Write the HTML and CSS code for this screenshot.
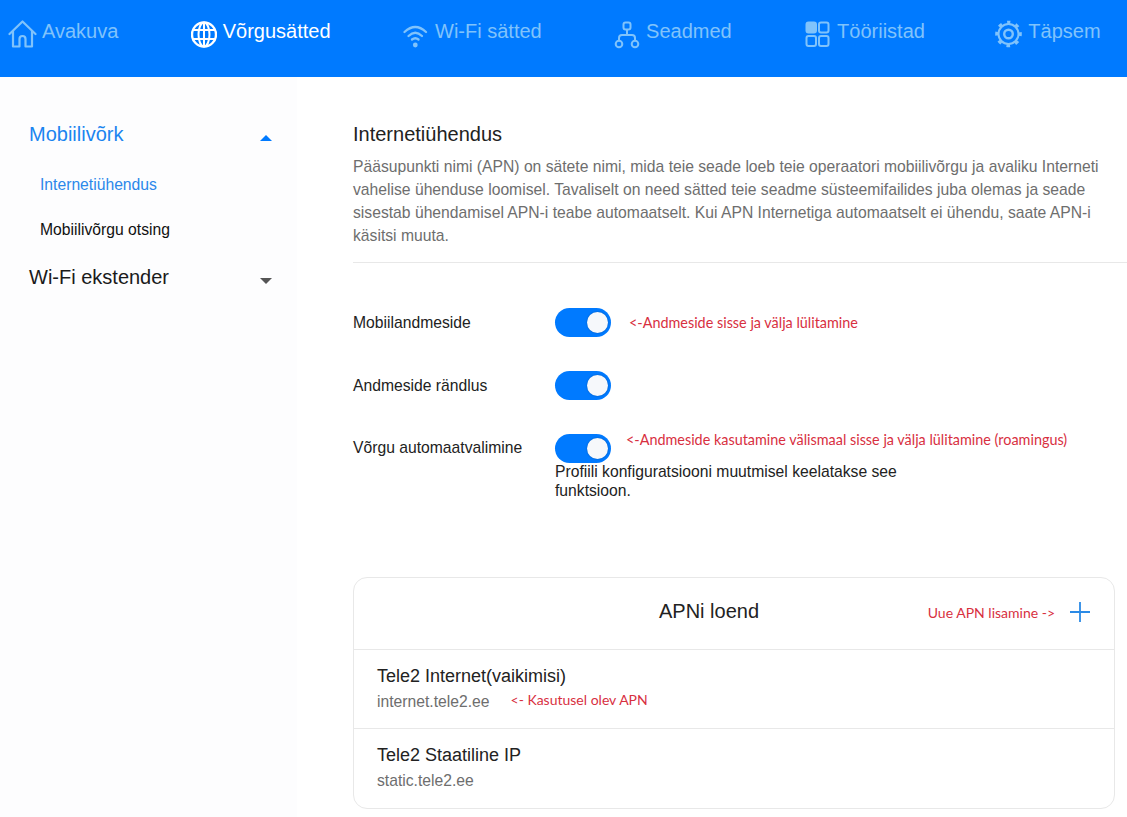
FILE: index.html
```html
<!DOCTYPE html>
<html lang="et">
<head>
<meta charset="utf-8">
<title>Internetiühendus</title>
<link rel="stylesheet" href="styles.css">
</head>
<body>
<header class="topbar">
  <nav class="nav">
    <a class="nav-item">
      <svg class="nav-icon w29" viewBox="0 0 29 30" fill="none" stroke="currentColor" stroke-width="2.200" stroke-linejoin="round" stroke-linecap="round"><path d="M1.500 15 14.500 2.500 27.500 15"/><path d="M5 12v15.500h6.500V20a3 3 0 0 1 6 0v7.500H24V12"/></svg>
      <span>Avakuva</span>
    </a>
    <a class="nav-item active">
      <svg class="nav-icon" viewBox="0 0 26 30" fill="none" stroke="currentColor" stroke-width="2"><circle cx="13" cy="15.500" r="12" stroke-width="2.400"/><ellipse cx="13" cy="15.500" rx="5.500" ry="12"/><path d="M2 11h22M2 20h22M13 3.500v24"/></svg>
      <span>Võrgusätted</span>
    </a>
    <a class="nav-item">
      <svg class="nav-icon" viewBox="0 0 26 30" fill="none" stroke="currentColor" stroke-width="2.300" stroke-linecap="round"><path d="M1.500 13Q12.300 3 23 13"/><path d="M5.500 17Q12.300 10.500 19 17"/><path d="M9 20.500Q12.300 18 15.500 20.500"/><circle cx="12.300" cy="26" r="2.400" fill="currentColor" stroke="none"/></svg>
      <span>Wi-Fi sätted</span>
    </a>
    <a class="nav-item">
      <svg class="nav-icon" viewBox="0 0 26 30" fill="none" stroke="currentColor" stroke-width="2"><rect x="9.500" y="3.500" width="7" height="7" rx="2"/><circle cx="5" cy="25" r="3.300"/><circle cx="21" cy="25" r="3.300"/><path d="M13 10.500V16M5 21.500V19a3 3 0 0 1 3-3h10a3 3 0 0 1 3 3v2.500"/></svg>
      <span>Seadmed</span>
    </a>
    <a class="nav-item">
      <svg class="nav-icon w27" viewBox="0 0 27 30" fill="none" stroke="currentColor" stroke-width="2"><rect x="2.500" y="3.500" width="9.500" height="10" rx="2" fill="currentColor"/><rect x="15" y="3.500" width="9.500" height="10" rx="2"/><rect x="2.500" y="17" width="9.500" height="10" rx="2"/><rect x="15" y="17" width="9.500" height="10" rx="2"/></svg>
      <span>Tööriistad</span>
    </a>
    <a class="nav-item nav-last">
      <svg class="nav-icon w27" viewBox="0 0 27 30" fill="none" stroke="currentColor" stroke-width="2"><circle cx="13.500" cy="15" r="10"/><circle cx="13.500" cy="15" r="4.300" stroke-width="2.400"/><circle class="teeth" cx="13.500" cy="15" r="11.800"/></svg>
      <span>Täpsem</span>
    </a>
  </nav>
</header>

<div class="page">
  <aside class="sidebar">
    <div class="menu-head current">
      <span>Mobiilivõrk</span>
      <i class="caret up"></i>
    </div>
    <a class="sub-item current">Internetiühendus</a>
    <a class="sub-item">Mobiilivõrgu otsing</a>
    <div class="menu-head second">
      <span>Wi-Fi ekstender</span>
      <i class="caret down"></i>
    </div>
  </aside>

  <main class="content">
    <section class="intro">
      <h1 class="title">Internetiühendus</h1>
      <p class="desc">Pääsupunkti nimi (APN) on sätete nimi, mida teie seade loeb teie operaatori mobiilivõrgu ja avaliku Interneti vahelise ühenduse loomisel. Tavaliselt on need sätted teie seadme süsteemifailides juba olemas ja seade sisestab ühendamisel APN-i teabe automaatselt. Kui APN Internetiga automaatselt ei ühendu, saate APN-i käsitsi muuta.</p>
    </section>

    <section class="settings">
      <div class="row">
        <div class="row-label">Mobiilandmeside</div>
        <div class="row-value"><span class="switch"></span><span class="note note-a">&lt;-Andmeside sisse ja välja lülitamine</span></div>
      </div>
      <div class="row">
        <div class="row-label">Andmeside rändlus</div>
        <div class="row-value"><span class="switch"></span></div>
      </div>
      <div class="row last">
        <div class="row-label tight">Võrgu automaatvalimine</div>
        <div class="row-stack">
          <div class="row-value"><span class="switch"></span><span class="note note-b">&lt;-Andmeside kasutamine välismaal sisse ja välja lülitamine (roamingus)</span></div>
          <p class="hint">Profiili konfiguratsiooni muutmisel keelatakse see funktsioon.</p>
        </div>
      </div>
    </section>

    <section class="card">
      <div class="card-head">
        <span class="card-title">APNi loend</span>
        <div class="card-action">
          <span class="note">Uue APN lisamine -&gt;</span>
          <svg class="plus" viewBox="0 0 20 20" stroke="#2b8ae6" stroke-width="1.800" fill="none"><path d="M10 0v20M0 10h20"/></svg>
        </div>
      </div>
      <div class="apn">
        <div class="apn-name">Tele2 Internet(vaikimisi)</div>
        <div class="apn-line"><span class="apn-host">internet.tele2.ee</span><span class="note note-c">&lt;- Kasutusel olev APN</span></div>
      </div>
      <div class="apn">
        <div class="apn-name">Tele2 Staatiline IP</div>
        <div class="apn-line"><span class="apn-host">static.tele2.ee</span></div>
      </div>
    </section>
  </main>
</div>
</body>
</html>
```

FILE: styles.css
```css
* { box-sizing: border-box; }

html, body {
  margin: 0;
  height: 817px;
  overflow: hidden;
  background: #fff;
  font-family: "Liberation Sans", Arial, sans-serif;
  color: #111;
}

.topbar {
  height: 77px;
  background: #007aff;
  padding: 17px 0 0 8px;
}

.nav {
  display: flex;
  gap: 72.400px;
  white-space: nowrap;
}

.nav-item {
  display: flex;
  align-items: center;
  gap: 6px;
  height: 28px;
  font-size: 20px;
  color: #80c3fb;
}

.nav-item.active { color: #fff; }
.nav-item.nav-last { margin-left: -2px; }

.nav-icon {
  width: 26px;
  height: 30px;
  margin-top: 5px;
  flex: none;
}

.nav-icon.w29 { width: 29px; margin-right: -1px; }
.nav-icon.w27 { width: 27px; }

.teeth {
  stroke-width: 3;
  stroke-dasharray: 3.700 5.567;
  stroke-dashoffset: 1.850;
  transform: rotate(-90deg);
  transform-origin: 13.500px 15px;
}

.page {
  display: flex;
  height: 740px;
}

.sidebar {
  width: 297px;
  flex: none;
  background: #fdfdfe;
  padding: 45px 25px 0 29px;
}

.menu-head {
  display: flex;
  justify-content: space-between;
  align-items: center;
  height: 24px;
  font-size: 20px;
  color: #1a1a1a;
}

.menu-head.current { color: #1a84f0; }
.menu-head.second { margin-top: 25px; }

.caret {
  width: 0;
  height: 0;
  border-left: 6.500px solid transparent;
  border-right: 6.500px solid transparent;
  margin-top: 8px;
}

.caret.up { border-bottom: 6.500px solid #007aff; margin-top: 7px; }
.caret.down { border-top: 6.500px solid #555; }

.sub-item {
  display: block;
  margin: 0 0 0 11px;
  font-size: 15.700px;
  line-height: 20px;
  padding-top: 25px;
  color: #111;
}

.sub-item.current { color: #2b88ea; padding-top: 29px; }

.content {
  flex: 1;
  min-width: 0;
  padding: 44px 12px 0 56px;
}

.title {
  margin: 0;
  font-size: 20px;
  line-height: 26px;
  font-weight: 400;
  color: #222;
}

.desc {
  margin: 0 -12px 0 0;
  padding: 8px 12px 15px 0;
  border-bottom: 1px solid #e8e8e8;
  font-size: 15.700px;
  line-height: 23px;
  color: #6e6e6e;
}

.settings { padding-top: 45px; }

.row {
  display: flex;
  height: 63px;
}

.row.last { height: 143px; }

.row-label {
  width: 202px;
  flex: none;
  font-size: 15.700px;
  line-height: 29px;
  color: #222;
}

.row-label.tight { line-height: 27px; }

.row-value {
  display: flex;
  align-items: center;
  height: 29px;
}

.switch {
  position: relative;
  display: block;
  width: 56px;
  height: 29px;
  border-radius: 15px;
  background: #007aff;
}

.switch::after {
  content: "";
  position: absolute;
  top: 4px;
  right: 3px;
  width: 21px;
  height: 21px;
  border-radius: 50%;
  background: #f6f8fb;
  box-shadow: 0 0 2px rgba(0, 0, 0, .3);
}

.note {
  font-family: Lato, "Open Sans", sans-serif;
  font-size: 14px;
  color: #d8303f;
  white-space: nowrap;
}

.note-a { margin-left: 18px; font-size: 14.400px; }
.note-b { margin-left: 15px; margin-top: -18px; font-size: 14.400px; }
.note-c { margin-top: -5px; }

.hint {
  margin: -1px 0 0;
  width: 360px;
  font-size: 15.700px;
  line-height: 19px;
  color: #222;
}

.card {
  border: 1px solid #e8e8e8;
  border-radius: 14px;
  height: 232px;
  width: 762px;
}

.card-head {
  position: relative;
  height: 72px;
  display: flex;
  align-items: center;
  justify-content: center;
  border-bottom: 1px solid #e8e8e8;
  padding: 0 50px 5px 0;
}

.card-title {
  font-size: 20px;
  color: #222;
}

.card-action {
  position: absolute;
  right: 24px;
  top: 24px;
  display: flex;
  align-items: center;
  gap: 15px;
}

.plus { width: 20px; height: 20px; flex: none; }

.apn {
  height: 79px;
  padding: 14px 23px 0;
  border-bottom: 1px solid #e8e8e8;
}

.apn:last-child { border-bottom: 0; }

.apn-name {
  font-size: 18px;
  line-height: 24px;
  color: #222;
}

.apn-line {
  display: flex;
  align-items: center;
  gap: 21px;
  height: 24px;
  margin-top: 2px;
}

.apn-host {
  font-size: 15.700px;
  color: #6e6e6e;
}
```
